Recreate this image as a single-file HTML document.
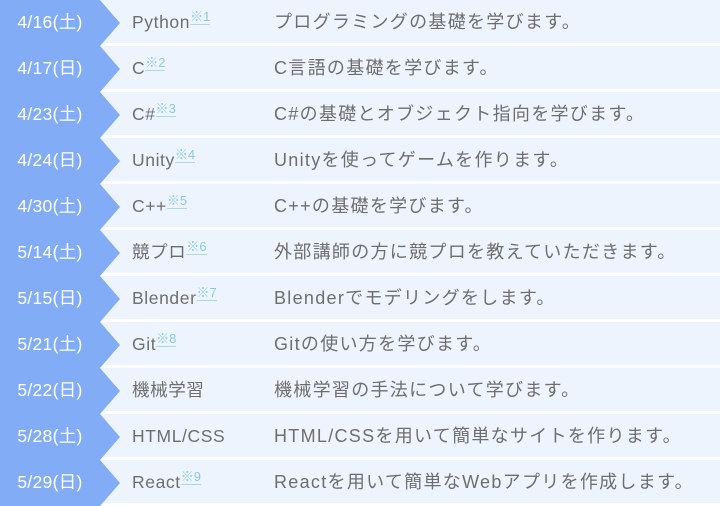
<!DOCTYPE html>
<html><head><meta charset="utf-8"><style>
*{margin:0;padding:0;box-sizing:border-box}
body{width:720px;height:506px;background:#fff;overflow:hidden;font-family:"Liberation Sans","Noto Sans CJK JP",sans-serif;position:relative}
.d{position:absolute;left:0;width:100px;text-align:center;color:#fff;font-size:17.5px;letter-spacing:0.3px;line-height:45px}
.n{position:absolute;left:132px;color:#6e6e6e;font-size:17.5px;letter-spacing:0.6px;line-height:45px}
.n sup{color:#86ccdc;font-size:13px;border-bottom:1px solid #a8dbe6;vertical-align:7px;line-height:1;letter-spacing:0}
.t{position:absolute;left:274px;color:#6e6e6e;font-size:18px;letter-spacing:1.3px;line-height:45px}
</style></head><body>
<svg width="720" height="506" style="position:absolute;left:0;top:0">
<g fill="#eef4fd">
<rect x="0" y="0" width="720" height="43"/><rect x="0" y="46" width="720" height="43"/><rect x="0" y="92" width="720" height="43"/><rect x="0" y="138" width="720" height="43"/><rect x="0" y="184" width="720" height="43"/><rect x="0" y="230" width="720" height="43"/><rect x="0" y="276" width="720" height="43"/><rect x="0" y="322" width="720" height="43"/><rect x="0" y="368" width="720" height="43"/><rect x="0" y="414" width="720" height="43"/><rect x="0" y="460" width="720" height="43"/>
</g>
<g fill="#82acf6">
<polygon points="0,0 100,0 120,23 100,46 0,46"/>
<polygon points="0,46 100,46 120,69 100,92 0,92"/>
<polygon points="0,92 100,92 120,115 100,138 0,138"/>
<polygon points="0,138 100,138 120,161 100,184 0,184"/>
<polygon points="0,184 100,184 120,207 100,230 0,230"/>
<polygon points="0,230 100,230 120,253 100,276 0,276"/>
<polygon points="0,276 100,276 120,299 100,322 0,322"/>
<polygon points="0,322 100,322 120,345 100,368 0,368"/>
<polygon points="0,368 100,368 120,391 100,414 0,414"/>
<polygon points="0,414 100,414 120,437 100,460 0,460"/>
<polygon points="0,460 100,460 120,483 100,506 0,506"/>
</g></svg>
<div class="d" style="top:0">4/16(土)</div><div class="n" style="top:0">Python<sup>※1</sup></div><div class="t" style="top:0">プログラミングの基礎を学びます。</div>
<div class="d" style="top:46px">4/17(日)</div><div class="n" style="top:46px">C<sup>※2</sup></div><div class="t" style="top:46px">C言語の基礎を学びます。</div>
<div class="d" style="top:92px">4/23(土)</div><div class="n" style="top:92px">C#<sup>※3</sup></div><div class="t" style="top:92px">C#の基礎とオブジェクト指向を学びます。</div>
<div class="d" style="top:138px">4/24(日)</div><div class="n" style="top:138px">Unity<sup>※4</sup></div><div class="t" style="top:138px">Unityを使ってゲームを作ります。</div>
<div class="d" style="top:184px">4/30(土)</div><div class="n" style="top:184px">C++<sup>※5</sup></div><div class="t" style="top:184px">C++の基礎を学びます。</div>
<div class="d" style="top:230px">5/14(土)</div><div class="n" style="top:230px">競プロ<sup>※6</sup></div><div class="t" style="top:230px">外部講師の方に競プロを教えていただきます。</div>
<div class="d" style="top:276px">5/15(日)</div><div class="n" style="top:276px">Blender<sup>※7</sup></div><div class="t" style="top:276px">Blenderでモデリングをします。</div>
<div class="d" style="top:322px">5/21(土)</div><div class="n" style="top:322px">Git<sup>※8</sup></div><div class="t" style="top:322px">Gitの使い方を学びます。</div>
<div class="d" style="top:368px">5/22(日)</div><div class="n" style="top:368px">機械学習</div><div class="t" style="top:368px">機械学習の手法について学びます。</div>
<div class="d" style="top:414px">5/28(土)</div><div class="n" style="top:414px">HTML/CSS</div><div class="t" style="top:414px">HTML/CSSを用いて簡単なサイトを作ります。</div>
<div class="d" style="top:460px">5/29(日)</div><div class="n" style="top:460px">React<sup>※9</sup></div><div class="t" style="top:460px">Reactを用いて簡単なWebアプリを作成します。</div>
</body></html>
